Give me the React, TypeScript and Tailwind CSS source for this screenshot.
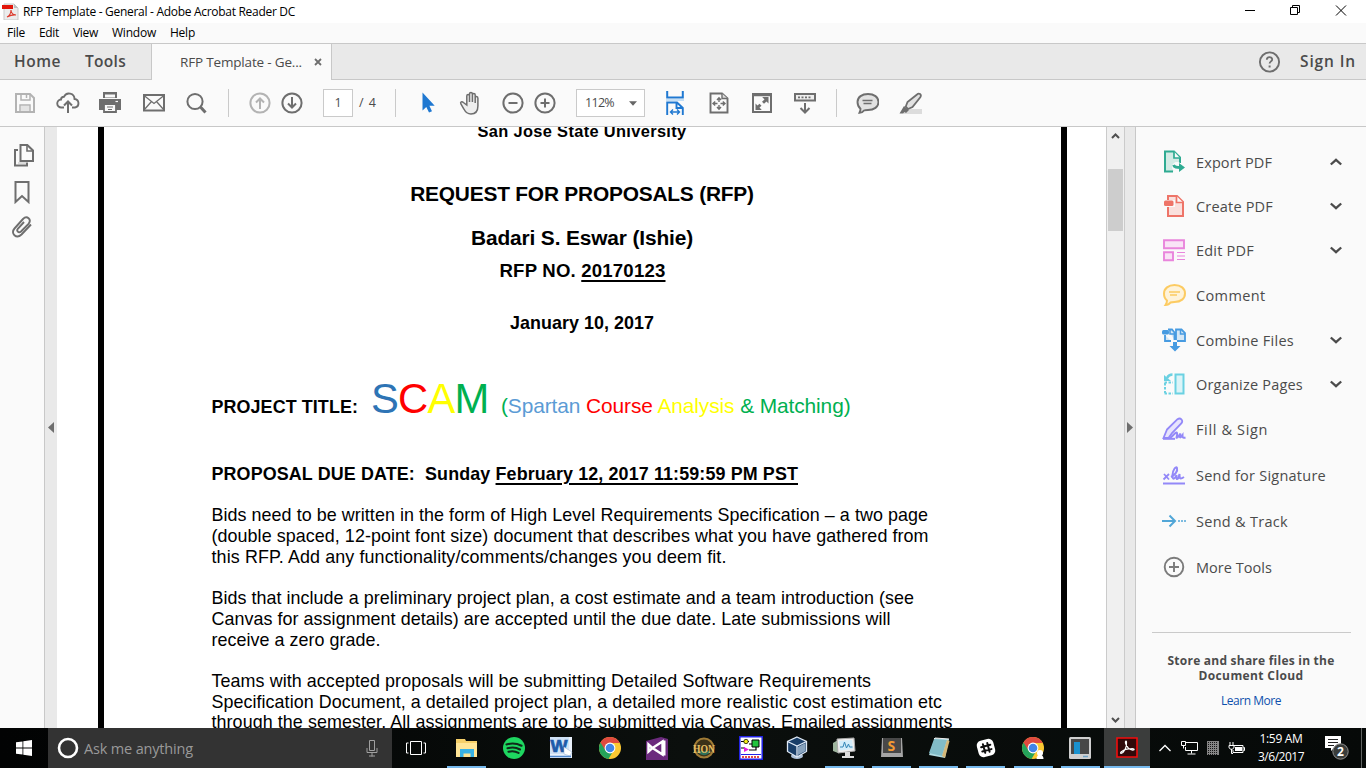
import React, { useLayoutEffect, useRef, useState } from "react";

type Kids = { children?: React.ReactNode };

/* Text run whose tracking is adjusted so that it spans exactly `w` pixels. */
function T({ w, className = "", children }: Kids & { w: number; className?: string }) {
  const ref = useRef<HTMLSpanElement>(null);
  const [ls, setLs] = useState(0);
  useLayoutEffect(() => {
    const el = ref.current;
    if (!el) return;
    const n = (el.textContent || "").length;
    setLs((w - el.getBoundingClientRect().width) / n);
  }, [w]);
  return (
    <span ref={ref} style={{ letterSpacing: ls + "px" }} className={"inline-block shrink-0 whitespace-pre " + className}>
      {children}
    </span>
  );
}

function Ico({ className = "", children }: Kids & { className?: string }) {
  return (
    <svg width="24" height="24" viewBox="0 0 24 24" fill="none" stroke="#6e6e6e" strokeWidth="2" className={"block shrink-0 " + className}>
      {children}
    </svg>
  );
}

const Divider = ({ className = "" }: { className?: string }) => <div className={"h-7 w-px shrink-0 bg-[#cacaca] " + className} />;

function TitleBar() {
  return (
    <div className="flex h-[23px] items-center bg-white">
      <svg width="17" height="17" viewBox="0 0 17 17" className="ml-[2px] block shrink-0">
        <path d="M2 1h10l4 4v12H2z" fill="#ececec" stroke="#c9c9c9" />
        <path d="M12 1v4h4z" fill="#bdbdbd" />
        <rect x="0" y="2" width="11" height="4" fill="#e2160b" />
        <path d="M5 14c2-1 4-4 4-7 0 3 2 5 5 5-3-.5-6 .5-9 2z" fill="none" stroke="#dc3a2c" strokeWidth="1.1" />
      </svg>
      <T w={272} className="ml-[4px] text-[12px] text-black">RFP Template - General - Adobe Acrobat Reader DC</T>
      <svg width="104" height="20" viewBox="0 0 104 20" fill="none" stroke="#000" className="mr-[18px] ml-auto block">
        <path d="M1 8.500h10" />
        <path d="M46.500 5.500h7v7h-7zM48.500 5.500v-2h7v7h-2" />
        <path d="M92 3.500l10 10M102 3.500l-10 10" />
      </svg>
    </div>
  );
}

function MenuBar() {
  return (
    <div className="flex h-5 items-center bg-[#fafafa] pl-[7px] text-[12px] text-black">
      <T w={18}>File</T>
      <T w={20} className="ml-[14px]">Edit</T>
      <T w={25} className="ml-[14px]">View</T>
      <T w={44} className="ml-[14px]">Window</T>
      <T w={25} className="ml-[14px]">Help</T>
    </div>
  );
}

function TabBar() {
  return (
    <div className="flex h-[37px] border-y border-[#c8c8c8] bg-[#e9e9e9] text-[#4b4b4b]">
      <div className="flex w-[151px] items-center pl-[14px] text-[15.500px] font-semibold">
        <T w={47}>Home</T>
        <T w={41} className="ml-6">Tools</T>
      </div>
      <div className="-mb-px flex w-[181px] items-center border-x border-[#c8c8c8] bg-[#fafafa] pl-7 text-[13.500px]">
        <T w={122}>RFP Template - Ge...</T>
        <svg width="8" height="8" viewBox="0 0 8 8" className="ml-[12px] block" stroke="#6e6e6e" strokeWidth="1.800">
          <path d="M1 1l6 6M7 1L1 7" />
        </svg>
      </div>
      <div className="ml-auto flex items-center pr-[10px] text-[15.500px] font-semibold">
        <Ico className="mr-[19px]">
          <circle cx="12.500" cy="12" r="9.600" strokeWidth="1.900" />
          <path d="M9.800 9.800c0-3.600 5.400-3.400 5.400-.4 0 2-2.600 2-2.600 4.200" strokeWidth="1.800" />
          <path d="M12.600 15.500v2" />
        </Ico>
        <T w={56}>Sign In</T>
      </div>
    </div>
  );
}

function Toolbar() {
  return (
    <div className="flex h-[47px] items-center border-b border-[#c8c8c8] bg-[#fafafa] pl-[13px] text-[#4b4b4b]">
      <Ico>
        <path d="M3 3h14l4 4v14H3z" stroke="#b3b3b3" />
        <path d="M8 3v6h9V3M13.500 4v3M7 21v-7h10v7" stroke="#b3b3b3" strokeWidth="1.500" />
        <path d="M8 15h8v5H8z" fill="#e4e4e4" stroke="none" />
      </Ico>
      <Ico className="ml-[19px]">
        <path d="M8 16.500H5.500a4 4 0 0 1-.5-8 3 3 0 0 1 3-2.800A5.500 5.500 0 0 1 18.500 8a4.300 4.300 0 0 1 .5 8.500h-3" strokeWidth="1.900" />
        <path d="M12 22v-11M8 14.500l4-4 4 4" />
      </Ico>
      <Ico className="ml-[18px]">
        <path d="M5 1h14v6H5z" fill="#6e6e6e" stroke="none" />
        <path d="M7 3.500h10v3H7z" fill="#fafafa" stroke="none" />
        <path d="M1 8h22v11H1z" fill="#6e6e6e" stroke="none" />
        <path d="M6 13h12v8H6z" fill="#fafafa" strokeWidth="1.800" />
        <path d="M9 16h6M10 18.500h4" strokeWidth="1.200" />
        <path d="M17.500 10.500h2.500" stroke="#fafafa" strokeWidth="1.200" />
      </Ico>
      <Ico className="ml-[20px]">
        <path d="M2 4h20v15.500H2z" />
        <path d="M2 4.500l10 8 10-8M2 19l7.500-8.500M22 19l-7.500-8.500" strokeWidth="1.300" />
      </Ico>
      <Ico className="ml-[18px]">
        <circle cx="11" cy="10.500" r="7.600" />
        <path d="M16.500 16l5 5.500" strokeWidth="3" />
      </Ico>
      <Divider className="ml-[20px]" />
      <Ico className="ml-[19px]">
        <circle cx="12" cy="12" r="9.600" stroke="#b3b3b3" />
        <path d="M12 18V7.500M8 11.500l4-4 4 4" stroke="#b3b3b3" />
      </Ico>
      <Ico className="ml-[8px]">
        <circle cx="12" cy="12" r="9.600" />
        <path d="M12 6v10.500M8 12.500l4 4 4-4" />
      </Ico>
      <div className="ml-[19px] flex h-7 w-[30px] shrink-0 items-center justify-center border border-[#cacaca] bg-white text-[12.500px]">1</div>
      <T w={18} className="ml-[6px] text-[12.500px]">/ 4</T>
      <Divider className="ml-[18px]" />
      <Ico className="ml-[20px]">
        <path d="M6.500 1.500v18l3.800-3.600 2.700 5.700 3-1.400-2.600-5.500h5.300z" fill="#1f78d1" stroke="none" />
      </Ico>
      <Ico className="ml-[19px]">
        <path d="M7.800 14V5c0-2 2.700-2 2.700 0v6-8c0-2 2.900-2 2.900 0v8-7c0-2 2.800-2 2.800 0v8-5c0-2 2.700-2 2.700.2V15c0 5-2.500 8-7 8-4 0-5.500-2-7-5l-3-5c-1-2 1-3 2.500-1.500z" fill="#eee" strokeWidth="1.500" />
      </Ico>
      <Ico className="ml-[18px]">
        <circle cx="12" cy="12" r="9.600" />
        <path d="M7.500 12h9" />
      </Ico>
      <Ico className="ml-[8px]">
        <circle cx="12" cy="12" r="9.600" />
        <path d="M7.500 12h9M12 7.500v9" />
      </Ico>
      <div className="ml-[19px] flex h-7 w-[69px] shrink-0 items-center border border-[#cacaca] bg-white pl-[8px] text-[12.500px]">
        <T w={29}>112%</T>
        <svg width="8" height="5" viewBox="0 0 7 4" className="ml-[15px]"><path d="M0 0h7L3.500 4z" fill="#666" /></svg>
      </div>
      <Ico className="ml-[18px]">
        <path d="M4.200 0v6.500h15.600V0" stroke="#1f78d1" />
        <path d="M3 9h18" stroke="#c5dff5" />
        <path d="M4.200 24V11.500H14l5.800 5.500v7M13.500 11.500V17h6" stroke="#1f78d1" strokeWidth="1.900" />
        <path d="M7.500 21h9M10 18.500L7.500 21l2.500 2.500M14 18.500l2.500 2.500-2.500 2.500" stroke="#1f78d1" strokeWidth="1.400" />
      </Ico>
      <Ico className="ml-[20px]">
        <path d="M3.500 2.500H15l5.500 5v14h-17z" strokeWidth="1.900" />
        <path d="M15 2.500v5h5.500" fill="#ddd" strokeWidth="1.400" />
        <path d="M12 7v4M12 14v4M6 12.500h4.500M13.500 12.500H18M10 9l2-2.200L14 9M10 16l2 2.200L14 16M8.200 10.500L6 12.500l2.200 2M15.800 10.500l2.200 2-2.200 2" strokeWidth="1.400" />
      </Ico>
      <Ico className="ml-[19px]">
        <path d="M3 3h18v18H3z" />
        <path d="M3 4h18" strokeWidth="2.500" />
        <path d="M18.500 6v6.500l-2-2-2.500 2.300-2-2 2.500-2.300-2.300-2.500zM5.500 19v-6.500l2 2 2-1.800 2 2-2 1.800 2.300 2.500z" fill="#6e6e6e" stroke="none" />
      </Ico>
      <Ico className="ml-[19px]">
        <path d="M2 3h20v6.500H2z" fill="#eee" />
        <path d="M5 6.300h14" strokeDasharray="2 1.500" strokeWidth="1.800" />
        <path d="M12 12v9.500M7.500 17l4.500 4.500 4.500-4.500" />
      </Ico>
      <Divider className="ml-[19px]" />
      <Ico className="ml-[18px]">
        <path d="M13 3C19 3 23.500 6 23.500 11s-4.500 8-10.500 8c-2 0-3 0-4 .5-1 1.500-2.500 2.300-4.500 2.300.8-1.500 1-2.500 1-4C3.500 16 2.500 14 2.500 11c0-5 4.500-8 10.500-8z" fill="#e2e2e2" strokeWidth="1.900" />
        <path d="M7.500 9.500h10M8.500 12.500h8" strokeWidth="1.300" />
      </Ico>
      <Ico className="ml-[19px]">
        <path d="M7 18h17v5H5z" fill="#dcdcdc" stroke="none" />
        <path d="M19 3.500c2-2 5 0 3.300 2.700L14.500 16l-4.500 2-2.200-2.500 1.700-4.500z" fill="#e2e2e2" strokeWidth="1.800" />
        <path d="M6 15l5 4-3 3-1.500-1L5 22.500H1.500z" fill="#6e6e6e" stroke="none" />
      </Ico>
    </div>
  );
}

function LeftRail() {
  return (
    <>
      <div className="flex w-[45px] flex-col items-center border-r border-[#c8c8c8] bg-[#fafafa] pt-4 pl-[2px]">
        <Ico>
          <path d="M9.500 2h6.800l5.700 5.500V18H9.500z" />
          <path d="M16 2v6h6" strokeWidth="1.600" />
          <path d="M7 7H4v15.500h12v-3" />
          <path d="M7 19h8v2H7z" fill="#ddd" stroke="none" />
        </Ico>
        <Ico className="mt-[13px]">
          <path d="M4.500 2h13v20L11 16l-6.500 6z" />
        </Ico>
        <Ico className="mt-[11px]">
          <path d="M20 9.500l-9.500 10c-5 5-11.500-1-7-6L12 4c4-4 9 .5 5.500 4.800L10 16.500c-2.500 2-5-.5-3-3L13 7" strokeWidth="1.900" />
        </Ico>
      </div>
      <div className="flex w-3 items-center justify-end bg-[#e9e9e9] pr-[3px]">
        <svg width="6" height="11" viewBox="0 0 6 11" className="block"><path d="M6 0v11L0 5.500z" fill="#6e6e6e" /></svg>
      </div>
    </>
  );
}

function Document() {
  return (
    <div className="flex min-w-0 flex-1 bg-white pl-[41px] font-['Liberation_Sans',Arial,sans-serif] text-black">
      <div className="w-[969px] overflow-hidden border-x-[6px] border-black">
        <div className="-mt-[6px] -ml-px flex flex-col items-center text-[17.9px] leading-6 font-bold">
          <T w={209} className="text-[16.4px] leading-5">San Jose State University</T>
          <T w={343.5} className="mt-[41px] text-[20.9px]">REQUEST FOR PROPOSALS (RFP)</T>
          <T w={222} className="mt-5 text-[20.9px]">Badari S. Eswar (Ishie)</T>
          <T w={166} className="mt-[9px] ml-px text-[18.600px]">
            RFP NO. <span className="underline decoration-2 underline-offset-[3px]">20170123</span>
          </T>
          <T w={144} className="mt-[28px]">January 10, 2017</T>
        </div>
        <div className="mt-10 flex items-baseline pl-[107.500px] text-[20.9px] leading-6">
          <T w={146.5} className="text-[17.9px] font-bold">PROJECT TITLE:</T>
          <T w={117.5} className="ml-[13px] text-[41.8px] leading-[48px]">
            <span className="text-[#2e74b5]">S</span>
            <span className="text-[#ff0000]">C</span>
            <span className="text-[#ffff00]">A</span>
            <span className="text-[#00b050]">M</span>
          </T>
          <T w={349.5} className="ml-[12.500px] text-[#00b050]">
            (<span className="text-[#5b9bd5]">Spartan</span> <span className="text-[#ff0000]">Course</span>{" "}
            <span className="text-[#ffff00]">Analysis</span> &amp; Matching)
          </T>
        </div>
        <div className="mt-[39px] flex pl-[107.500px] text-[17.9px] leading-6 font-bold">
          <T w={586.5}>
            {"PROPOSAL DUE DATE:  Sunday "}
            <span className="underline decoration-2 underline-offset-[3px]">February 12, 2017 11:59:59 PM PST</span>
          </T>
        </div>
        <div className="mt-[19.400px] flex flex-col items-start pl-[107.500px] text-[17.9px] leading-[20.700px]">
          <T w={716.5}>Bids need to be written in the form of High Level Requirements Specification – a two page</T>
          <T w={717}>(double spaced, 12-point font size) document that describes what you have gathered from</T>
          <T w={515}>this RFP. Add any functionality/comments/changes you deem fit.</T>
          <T w={702.5} className="mt-[20.700px]">Bids that include a preliminary project plan, a cost estimate and a team introduction (see</T>
          <T w={679}>Canvas for assignment details) are accepted until the due date. Late submissions will</T>
          <T w={169}>receive a zero grade.</T>
          <T w={659.5} className="mt-[20.700px]">Teams with accepted proposals will be submitting Detailed Software Requirements</T>
          <T w={730.5}>Specification Document, a detailed project plan, a detailed more realistic cost estimation etc</T>
          <T w={741}>through the semester. All assignments are to be submitted via Canvas. Emailed assignments</T>
        </div>
      </div>
    </div>
  );
}

const Arrow = ({ up = false }: { up?: boolean }) => (
  <svg width="9" height="6" viewBox="0 0 9 6" fill="none" stroke="#505050" strokeWidth="2" className="block">
    <path d={up ? "M1 5l3.500-3.500L8 5" : "M1 1l3.500 3.500L8 1"} />
  </svg>
);

function Scrollbar() {
  return (
    <>
      <div className="flex w-[19px] flex-col border-x border-[#cbcbcb] bg-[#f0f0f0] pl-px">
        <div className="flex h-[17px] items-center justify-center pr-px"><Arrow up /></div>
        <div className="mt-[25px] h-[62px] w-[15px] bg-[#cdcdcd]" />
        <div className="mt-auto flex h-[17px] items-center justify-center pr-px"><Arrow /></div>
      </div>
      <div className="flex w-[11px] items-center border-r border-[#c8c8c8] bg-[#e9e9e9] pl-[2px]">
        <svg width="6" height="11" viewBox="0 0 6 11" className="block"><path d="M0 0v11l6-5.500z" fill="#6e6e6e" /></svg>
      </div>
    </>
  );
}

type Tool = { label: string; w: number; gap: string; arrow?: "up" | "down"; icon: React.ReactNode };

const tools: Tool[] = [
  {
    label: "Export PDF", w: 76, gap: "", arrow: "up",
    icon: (
      <g stroke="#2fab92">
        <path d="M11 21.500H3v-20h9l6 6V13" fill="#d3ebe5" />
        <path d="M12 1.500V8h6" fill="#fafafa" strokeWidth="1.700" />
        <circle cx="15" cy="17" r="5" fill="#fafafa" stroke="none" />
        <path d="M11.500 15c1 2.500 3 2.500 7 2.500" strokeWidth="2.800" />
        <path d="M17 13l6 4.500-6 4.500z" fill="#2fab92" stroke="none" />
      </g>
    ),
  },
  {
    label: "Create PDF", w: 77, gap: "mt-5", arrow: "down",
    icon: (
      <g stroke="#ee7468">
        <path d="M6 8V2h9l6 6v14H6v-9" fill="#fae0dd" />
        <path d="M14.500 2v6.500H21" fill="#fafafa" strokeWidth="1.700" />
        <path d="M4 6h9v7H4z" fill="#fafafa" stroke="none" />
        <rect x="2" y="6.500" width="9.500" height="5.500" rx="1.500" fill="#ee7468" stroke="none" />
      </g>
    ),
  },
  {
    label: "Edit PDF", w: 58, gap: "mt-5", arrow: "down",
    icon: (
      <g stroke="#e985dc" fill="#f9e3f6" strokeWidth="1.900">
        <path d="M2 2.200h20v8H2zM2 14.200h9v8H2z" />
        <path d="M15 14.500h8M15 18h8M15 21.500h8" strokeWidth="1.200" />
      </g>
    ),
  },
  {
    label: "Comment", w: 69.5, gap: "mt-[21px]",
    icon: (
      <g stroke="#fccb62">
        <path d="M12.500 2C19 2 23 5.500 23 10.500S19 19 12.500 19c-2 0-3 0-4 .5-1 1.500-3 2.500-5 2.500 1-1.500 1.500-3 1.500-4.500-2-1.500-3-4-3-7C2 5.500 6.500 2 12.500 2z" fill="#fef3da" />
        <path d="M7 9h11M8 12h7" strokeWidth="1.300" />
      </g>
    ),
  },
  {
    label: "Combine Files", w: 98, gap: "mt-[21px]", arrow: "down",
    icon: (
      <g stroke="#479be1">
        <path d="M3 7v6h6M6 1.500h4l2.500 3V12M15 13h8V5l-3.500-3.500H14V12" fill="#d5e7f5" strokeWidth="1.800" />
        <path d="M8 1.500V6h4M18.500 1.500V6H23" strokeWidth="1.500" />
        <rect x="0" y="2" width="7" height="4.500" rx="1.500" fill="#479be1" stroke="none" />
        <path d="M11 14h4v4h3.500L13 23.500 7.500 18H11z" fill="#479be1" stroke="none" />
      </g>
    ),
  },
  {
    label: "Organize Pages", w: 107, gap: "mt-5", arrow: "down",
    icon: (
      <g stroke="#6bd1e2">
        <path d="M13.500 2.500h8v19h-8z" fill="#dcf4f8" />
        <path d="M2.500 10.500h8.500M2.500 21.500h8.500M3 11v10" strokeDasharray="2.500 1.500" />
        <path d="M10.500 2.500C8 2.500 6 4 5 6" strokeWidth="2.500" />
        <path d="M2 3v6h7z" fill="#6bd1e2" stroke="none" />
      </g>
    ),
  },
  {
    label: "Fill & Sign", w: 72, gap: "mt-[21px]",
    icon: (
      <g stroke="#9388f8">
        <path d="M5 12.500L15.500 2.200c3-2 6 1 4 4L10 16l-3.500 5H1.500z" fill="#e7e4fd" strokeWidth="1.800" />
        <path d="M8 21c2-1 6-7 7-5s-2 6 .5 4.500l3-4c-.5 2-1.500 5 .5 3.500l1.500-2c0 2 0 3.500 3 2.500" />
        <path d="M1 21.800h12" />
      </g>
    ),
  },
  {
    label: "Send for Signature", w: 130, gap: "mt-[22px]",
    icon: (
      <g stroke="#9388f8">
        <path d="M1 20.500h22" />
        <path d="M2 11l5 5.500M7 11l-5.500 5.500" strokeWidth="1.800" />
        <path d="M9 14c4-2 7-6 6-9-1-2-4 1-4.500 7-.3 5 2 5 4 0 0 4 0 5 2 3l1-4c0 4 0 6 4.500 3" />
      </g>
    ),
  },
  {
    label: "Send & Track", w: 92, gap: "mt-[22px]",
    icon: (
      <g stroke="#51a6d7">
        <path d="M0 12h13M7.500 6.500l5.500 5.500-5.500 5.500" />
        <path d="M16 12h8" strokeDasharray="2 1" opacity=".75" />
      </g>
    ),
  },
  {
    label: "More Tools", w: 76, gap: "mt-[22px]",
    icon: (
      <g stroke="#7b7b7b">
        <circle cx="12" cy="12" r="9.300" strokeWidth="1.900" />
        <path d="M7 12h10M12 7v10" strokeWidth="1.900" />
      </g>
    ),
  },
];

function ToolsPanel() {
  return (
    <div className="flex w-[230px] flex-col bg-[#fafafa] pt-[23px] text-[#4b4b4b]">
      {tools.map((t) => (
        <div key={t.label} className={"flex h-6 items-center pl-[26px] text-[14.500px] " + t.gap}>
          <Ico>{t.icon}</Ico>
          <T w={t.w} className="mt-[2px] ml-[10px] leading-6">{t.label}</T>
          {t.arrow && (
            <svg width="12" height="8" viewBox="0 0 12 8" fill="none" stroke="#4b4b4b" strokeWidth="2.300" className="mr-6 ml-auto block">
              <path d={t.arrow === "up" ? "M.8 6.500L6 1.800l5.200 4.700" : "M.8 1.500L6 6.200l5.200-4.700"} />
            </svg>
          )}
        </div>
      ))}
      <div className="mr-[15px] ml-4 mt-[53px] h-px shrink-0 bg-[#cacaca]" />
      <div className="mt-5 flex flex-col items-center text-[12px] leading-[15px] font-bold">
        <T w={167}>Store and share files in the</T>
        <T w={105}>Document Cloud</T>
        <T w={60} className="mt-[10px] font-normal text-[#0d50ad]">Learn More</T>
      </div>
    </div>
  );
}

const Chrome = () => (
  <g>
    <circle cx="12" cy="12" r="11" fill="#fbc832" />
    <path d="M12 12L2.500 6.500A11 11 0 0 0 10.500 23l5-8.500z" fill="#25a35a" />
    <path d="M12 7h9.800A11 11 0 0 0 2.500 6.500l5 8z" fill="#e04a3f" />
    <circle cx="12" cy="12" r="5.400" fill="#fff" />
    <circle cx="12" cy="12" r="4.300" fill="#4285e8" />
  </g>
);

const apps: { id: string; open?: boolean; shift?: string; icon: React.ReactNode }[] = [
  {
    id: "explorer", open: true,
    icon: (
      <g>
        <path d="M1 3h9l1 2h11v16H1z" fill="#f5cf69" />
        <path d="M1 7h21v14H1z" fill="#ffe596" />
        <path d="M5 21v-8h14v8h-3.500v-3.500h-7V21z" fill="#38b2e6" />
      </g>
    ),
  },
  {
    id: "music",
    icon: (
      <g>
        <circle cx="12" cy="12" r="11" fill="#1ed760" />
        <path d="M4.500 8.500c5-1.500 10.500-1 15 1.200M5.500 12.300c4.500-1.300 9-.8 12.500 1.200M6.500 15.800c3.500-1 7-.6 10 1.100" fill="none" stroke="#10291a" strokeWidth="2.100" strokeLinecap="round" />
      </g>
    ),
  },
  {
    id: "word",
    icon: (
      <g>
        <path d="M1 1h22v21H1z" fill="#e9f1fb" />
        <path d="M1 1h19v17H1z" fill="#cfe1f5" />
        <text x="1.500" y="16" fontSize="17" fontWeight="700" textLength="17" lengthAdjust="spacingAndGlyphs" fill="#1d5baa" stroke="#1d5baa" strokeWidth=".7" className="font-['Liberation_Sans',sans-serif]">W</text>
        <path d="M15 11l8 5-2 4-6-2z" fill="#fff" stroke="#9db7d8" strokeWidth=".6" />
        <path d="M1 20.500h21" stroke="#4e87cd" strokeWidth="1.500" />
      </g>
    ),
  },
  { id: "browser", shift: "pl-[3px]", icon: <Chrome /> },
  {
    id: "studio", shift: "pl-[3px]",
    icon: (
      <g>
        <path d="M1 5L16 1l7 2v21H1z" fill="#6b2a7d" />
        <path d="M3.500 8.500v7l4-3.500zM7.500 12l10-6.500v13z" fill="none" stroke="#fff" strokeWidth="2.400" />
        <path d="M17.500 4.500h3v15h-3z" fill="#fff" />
      </g>
    ),
  },
  {
    id: "hon", shift: "pl-[3px]",
    icon: (
      <g>
        <circle cx="12" cy="12" r="9.500" fill="#3c3118" stroke="#a17c36" strokeWidth="2" />
        <path d="M5 15a8 8 0 0 0 14 0z" fill="#2d715a" />
        <text x="1" y="16.500" fontSize="13" fontWeight="700" textLength="22" lengthAdjust="spacingAndGlyphs" fill="#e6bd63" className="font-['Liberation_Serif',serif]">HON</text>
      </g>
    ),
  },
  {
    id: "circuit", shift: "pl-[3px]",
    icon: (
      <g>
        <path d="M.8.800h22.400v22.400H.8z" fill="#fff" stroke="#2323e8" strokeWidth="1.500" />
        <path d="M2 5.500h8M10 8h4M17 11v3h-7M2 12h4" stroke="#000" strokeWidth="1.200" fill="none" />
        <circle cx="7" cy="5.500" r="2.200" fill="#f5ed15" stroke="#000" strokeWidth=".7" />
        <path d="M13 4h7v7h-7z" fill="#21c43c" stroke="#000" />
        <path d="M5 11l5 2.500L5 16z" fill="#e51be0" />
        <path d="M2 18.500h20" stroke="#2323e8" />
        <path d="M3 21h18" stroke="#e34848" strokeWidth="2" strokeDasharray="2 1" />
      </g>
    ),
  },
  {
    id: "vbox",
    icon: (
      <g stroke="#dfe9f5">
        <ellipse cx="12" cy="20" rx="6" ry="3" fill="#adc1d8" stroke="none" />
        <path d="M12 1l9.500 4.500v10L12 21l-9.500-5.500v-10z" fill="#193e68" strokeWidth="1.300" />
        <path d="M2.500 5.500L12 10l9.500-4.500M12 10v11" fill="none" strokeWidth="1.300" />
        <path d="M13 11l7.500-4v8L13 19z" fill="#88a3bd" stroke="none" />
      </g>
    ),
  },
  {
    id: "monitor", open: true,
    icon: (
      <g>
        <path d="M1 7l5-3v13l-5-2z" fill="#9fb69f" />
        <path d="M5 3l17-1 1 13-17 2z" fill="#eee" stroke="#aaa" />
        <path d="M7 5l13-1 1 9-13 1.500z" fill="#d3edfa" />
        <path d="M8 11l3 0 1.500-5 2 6 2-4 1 3h3" fill="none" stroke="#3286b7" />
        <path d="M13 16h5v4h4v2H10v-2h3z" fill="#ddd" />
      </g>
    ),
  },
  {
    id: "sublime", open: true,
    icon: (
      <g>
        <path d="M2 2h20l1 19H1z" fill="#a5a5a5" />
        <path d="M3 2h18v15H3z" fill="#484848" />
        <text x="7.500" y="14.500" fontSize="14" fontWeight="700" fill="#f49a33">S</text>
      </g>
    ),
  },
  {
    id: "notes", open: true,
    icon: (
      <g>
        <path d="M8 2l14 1-4 19-16-3z" fill="#b0dbe2" />
        <path d="M7 3l13 1-5 16-13-3z" fill="#82bcc7" />
        <path d="M20 4l2.500 1L18 22l-3-2z" fill="#d5b879" />
        <path d="M7 3l1-1 14 1" stroke="#eee" fill="none" />
      </g>
    ),
  },
  {
    id: "slack", open: true,
    icon: (
      <g>
        <rect x="3.500" y="3.500" width="17" height="17" rx="5" fill="#fff" transform="rotate(-15 12 12)" />
        <g stroke="#111" strokeWidth="2" strokeLinecap="round" transform="rotate(-15 12 12)">
          <path d="M10 7.500v9M14.500 7.500v9M7.500 10h9.500M7.500 14.500h9.500" />
        </g>
      </g>
    ),
  },
  {
    id: "browser-profile", open: true,
    icon: (
      <g>
        <Chrome />
        <circle cx="19" cy="17" r="3" fill="#fff" />
        <path d="M15.500 23c0-6 7-6 7 0z" fill="#fff" />
      </g>
    ),
  },
  {
    id: "device", open: true,
    icon: (
      <g>
        <rect x="1" y="1" width="22" height="22" rx="1.500" fill="#cfcfcf" />
        <rect x="3" y="3" width="18" height="15" fill="#484848" />
        <rect x="6" y="6" width="6" height="12" fill="#1a91ce" />
        <path d="M15 20.500h5" stroke="#6fa3c6" strokeWidth="1.500" />
      </g>
    ),
  },
];

const Cell = ({ children, wide = "w-[39px]", open = false }: Kids & { wide?: string; open?: boolean }) => (
  <>
    <svg width="24" height="24" viewBox="0 0 24 24" className="mt-2 block">{children}</svg>
    {open && <div className={"mt-auto h-[2px] bg-[#76b9ed] " + wide} />}
  </>
);

function Taskbar() {
  return (
    <div className="flex h-10 bg-[#050807] bg-linear-to-r from-[#020303] via-[#0b0f0d] to-[#060908]">
      <div className="flex w-12 items-center justify-center">
        <svg width="16" height="16" viewBox="0 0 16 16" fill="#fff">
          <path d="M0 2.300L6.500 1.400v6.200H0zM7.300 1.300L16 0v7.600H7.300zM0 8.400h6.500v6.200L0 13.700zM7.300 8.400H16V16l-8.700-1.300z" />
        </svg>
      </div>
      <div className="flex w-[344px] items-center bg-[#333333] pl-[9px]">
        <svg width="22" height="22" viewBox="0 0 22 22" className="block"><circle cx="11" cy="11" r="9" fill="none" stroke="#fff" strokeWidth="2.600" /></svg>
        <T w={109} className="mt-[2px] ml-[5px] text-[14.500px] text-[#999]">Ask me anything</T>
        <svg width="12" height="17" viewBox="0 0 12 17" fill="none" stroke="#a0a0a0" className="mr-[14px] ml-auto block">
          <path d="M3.500.500h5v10h-5zM1 8v4.500h10V8M6 12.500v4M3 16h6" />
        </svg>
      </div>
      <div className="flex w-[51px] items-center pl-[14px]">
        <svg width="20" height="14" viewBox="0 0 20 14" fill="none" stroke="#fff">
          <path d="M4.500.500h11v13h-11zM2.500 2H.5v10h2M17.500 2h2v10h-2" />
        </svg>
      </div>
      <div className="grid w-[661px] grid-cols-[repeat(14,minmax(0,1fr))]">
        {apps.map((a) => (
          <div key={a.id} className={"flex flex-col items-center " + (a.shift || "")}><Cell open={a.open}>{a.icon}</Cell></div>
        ))}
      </div>
      <div className="flex w-[46px] flex-col items-center bg-[#3b3d3c]">
        <Cell open wide="w-full">
          <path d="M2 2h20v19H2z" fill="#310a0b" stroke="#f20c0c" strokeWidth="1.600" />
          <path d="M6 17.500c3-1 6-6 5.500-11.500-.2-1.500-1.500-1-1 1 1 4 4 7.500 8 7 1.500-.5 0-1.500-2-1.300-4 0-8 1.300-10.500 3.300-.8 1-.3 1.500 0 1.500z" fill="none" stroke="#fff" strokeWidth="1.200" />
        </Cell>
      </div>
      <div className="flex flex-1 items-center text-white">
        <svg width="12" height="8" viewBox="0 0 12 8" fill="none" stroke="#fff" strokeWidth="1.300" className="ml-[9px]"><path d="M.5 7L6 1.500 11.500 7" /></svg>
        <svg width="17" height="14" viewBox="0 0 17 14" fill="none" stroke="#fff" className="ml-[10px]">
          <path d="M5 1.500h11.500v8H4.500V6M10.500 9.500v3M6.500 13h8M.5.500h4v4h-4zM2.500 4.500v3" />
        </svg>
        <svg width="12" height="14" viewBox="0 0 12 14" className="ml-[9px]">
          <path d="M0 0h12v14H0z" fill="#858585" />
          <path d="M1.500 1v13M3.500 1v13M5.500 1v13M7.500 1v13M9.500 1v13" stroke="#161616" strokeDasharray="1 1" />
        </svg>
        <svg width="17" height="13" viewBox="0 0 17 13" fill="none" stroke="#fff" className="ml-[9px]">
          <path d="M6 3.500h9v7H5V8M15.500 5.500h1v3h-1M2 0v3M5 0v3M1 3.500h5V5c0 3-5 3-5 0zM3.500 7v4.500H5" />
          <path d="M7 5h7v4H7z" fill="#fff" stroke="none" />
        </svg>
        <div className="ml-[12px] flex w-[48px] flex-col items-center text-[12px] leading-[18px]">
          <T w={43}>1:59 AM</T>
          <T w={46}>3/6/2017</T>
        </div>
        <svg width="26" height="26" viewBox="0 0 26 26" className="ml-[20px] block">
          <path d="M0 1h16v12H9l-3 3v-3H0z" fill="#fff" />
          <path d="M3 4.500h10M3 7.500h10M3 10.500h6" stroke="#222" />
          <circle cx="15.500" cy="16.500" r="7.700" fill="#3a3d3b" stroke="#909090" />
          <text x="15.500" y="21" fontSize="12" fontWeight="700" textAnchor="middle" fill="#fff">2</text>
        </svg>
        <div className="mr-1 ml-auto h-full w-px bg-[#606362]" />
      </div>
    </div>
  );
}

export default function App() {
  return (
    <div className="flex h-[768px] w-[1366px] flex-col overflow-hidden font-['Open_Sans','Noto_Sans',sans-serif]">
      <TitleBar />
      <MenuBar />
      <TabBar />
      <Toolbar />
      <div className="flex h-[601px] overflow-hidden">
        <LeftRail />
        <Document />
        <Scrollbar />
        <ToolsPanel />
      </div>
      <Taskbar />
    </div>
  );
}
